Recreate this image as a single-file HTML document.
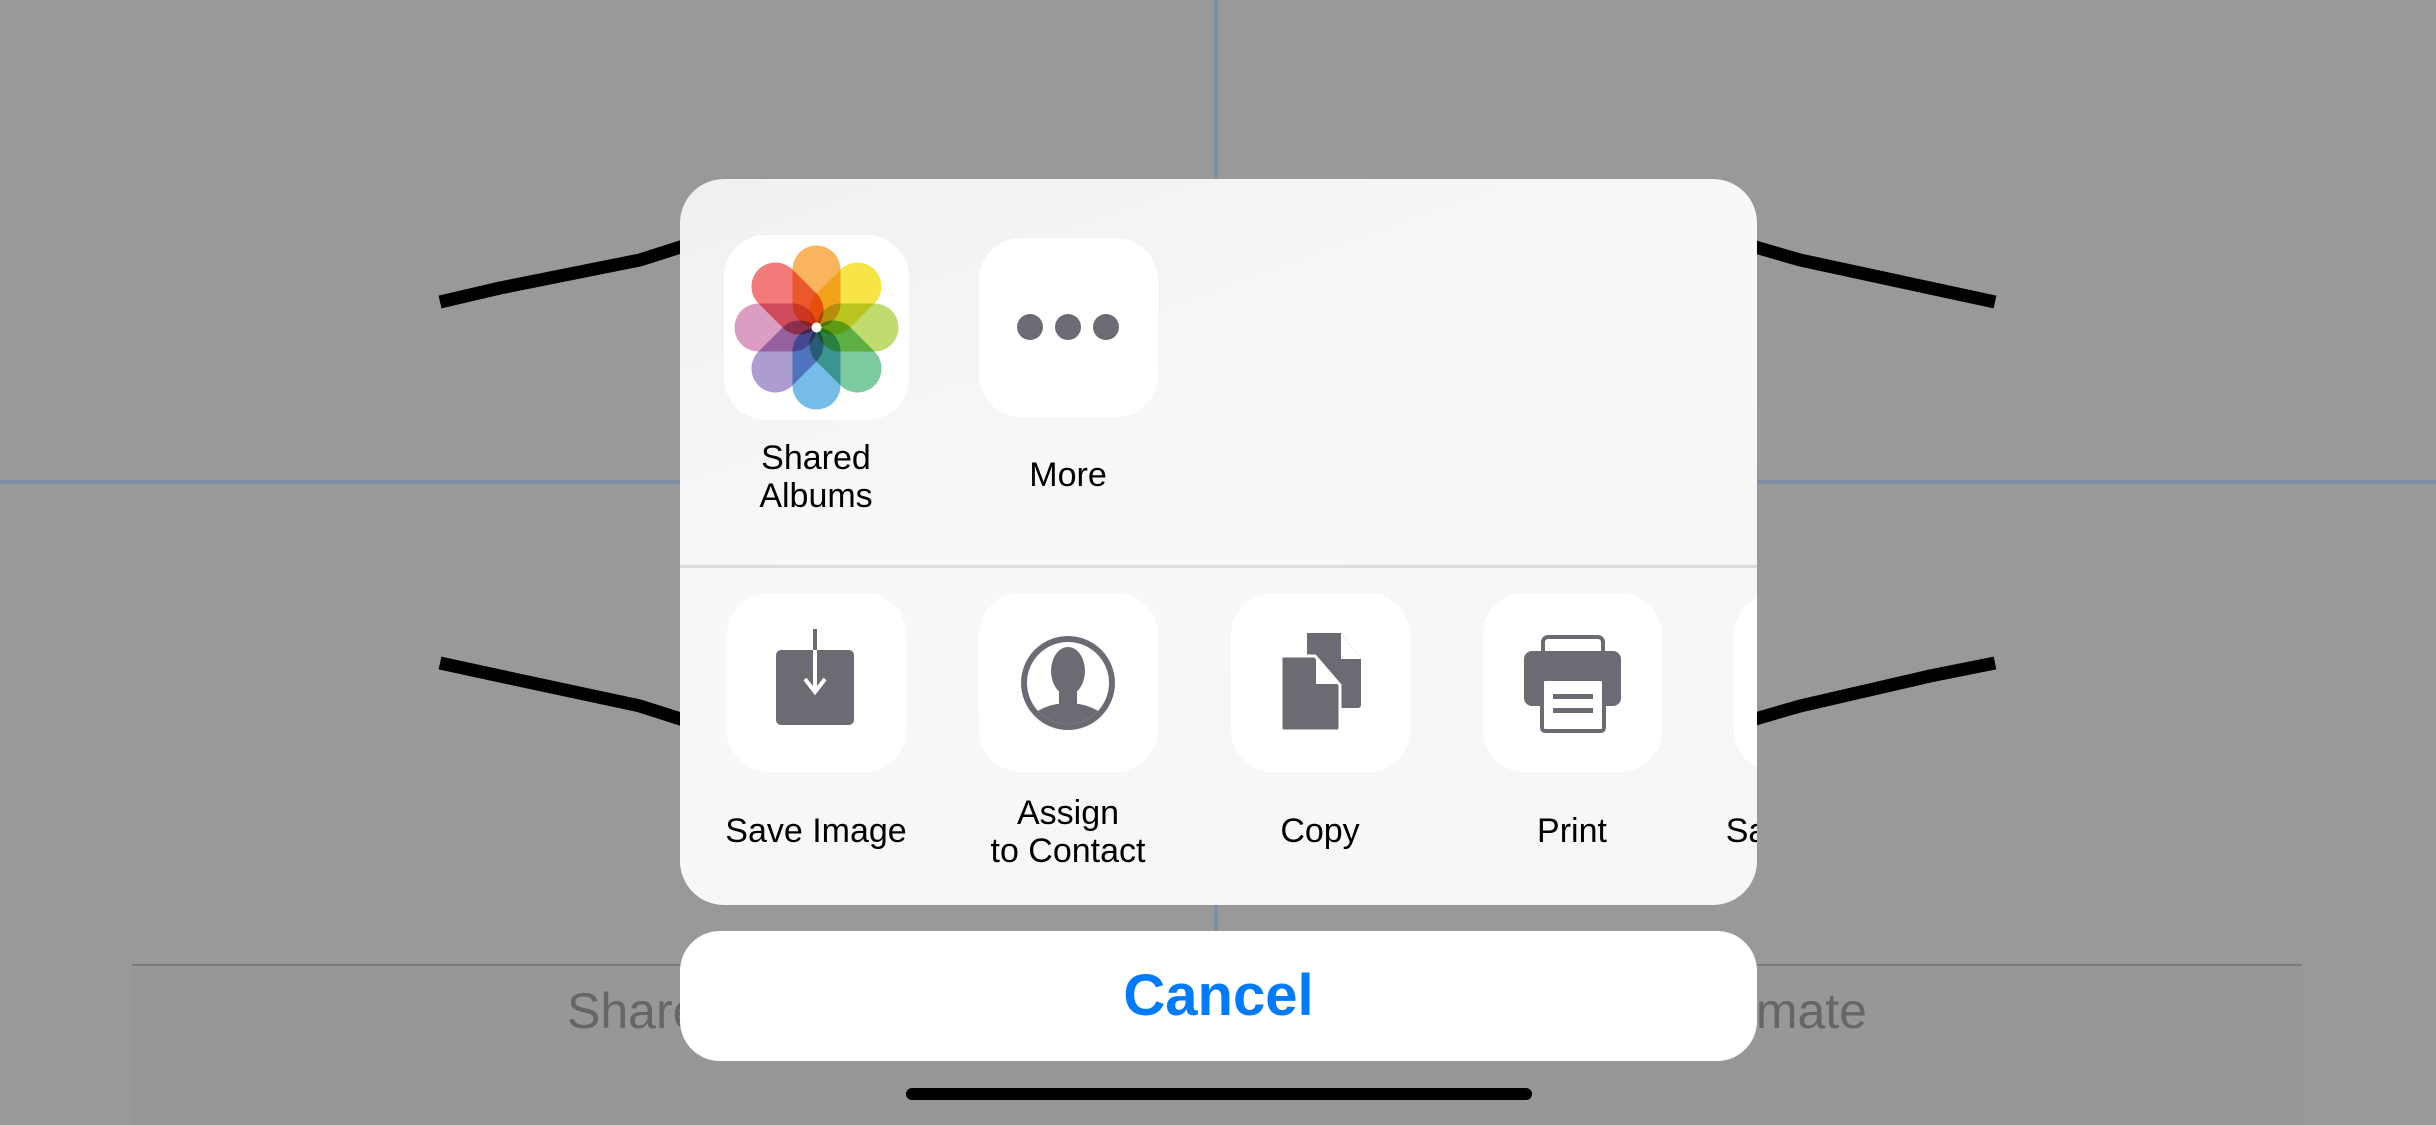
<!DOCTYPE html>
<html><head><meta charset="utf-8"><style>
html,body{margin:0;padding:0}
body{width:2436px;height:1125px;background:#999;position:relative;overflow:hidden;font-family:"Liberation Sans",sans-serif}
.abs{position:absolute}
.sheet{left:680px;top:179px;width:1077px;height:726px;background:linear-gradient(160deg,#f0f0f0,#f8f8f8 40%,#f6f6f6);border-radius:44px;overflow:hidden}
.box{position:absolute;background:#fff;border-radius:42px;width:179px;height:179px}
.lbl{position:absolute;width:260px;text-align:center;font-size:34px;line-height:38px;color:#000}
.cancel{left:680px;top:931px;width:1077px;height:130px;background:#fff;border-radius:40px;color:#007aff;font-weight:bold;font-size:58px;text-align:center;line-height:130px}
.p{mix-blend-mode:multiply;opacity:.82}
</style></head><body>
<svg class="abs" style="left:0;top:0" width="2436" height="1125">
<line x1="1216" y1="0" x2="1216" y2="930" stroke="#7d8ea6" stroke-width="4"/>
<line x1="0" y1="482" x2="2436" y2="482" stroke="#7d8ea6" stroke-width="4"/>
<polyline points="440,302 500,288 640,260 690,244" fill="none" stroke="#000" stroke-width="13"/>
<polyline points="1745,244 1800,260 1930,288 1995,302" fill="none" stroke="#000" stroke-width="13"/>
<polyline points="440,663 500,676 640,706 690,722" fill="none" stroke="#000" stroke-width="13"/>
<polyline points="1745,722 1800,706 1930,676 1995,663" fill="none" stroke="#000" stroke-width="13"/>
<line x1="132" y1="965" x2="2302" y2="965" stroke="#7a7a7a" stroke-width="2"/>
<rect x="132" y="966" width="2170" height="159" fill="#979797"/>
<text x="567" y="1028" font-family="Liberation Sans" font-size="50" fill="#666">Share</text>
<text x="1867" y="1028" font-family="Liberation Sans" font-size="50" fill="#666" text-anchor="end">Animate</text>
<rect x="906" y="1088" width="626" height="12" rx="6" fill="#000"/>
</svg>
<div class="abs sheet">
  <div class="box" style="left:44px;top:56px;width:185px;height:185px">
    <svg width="185" height="185" viewBox="-92.5 -92.5 185 185" style="position:absolute;left:0;top:0">
        <rect class="p" x="-24" y="-82" width="48" height="82" rx="24" fill="#f9a43a" transform="rotate(0)"/>
        <rect class="p" x="-24" y="-82" width="48" height="82" rx="24" fill="#f5df1e" transform="rotate(45)"/>
        <rect class="p" x="-24" y="-82" width="48" height="82" rx="24" fill="#b2d44f" transform="rotate(90)"/>
        <rect class="p" x="-24" y="-82" width="48" height="82" rx="24" fill="#5fbf8a" transform="rotate(135)"/>
        <rect class="p" x="-24" y="-82" width="48" height="82" rx="24" fill="#58ade3" transform="rotate(180)"/>
        <rect class="p" x="-24" y="-82" width="48" height="82" rx="24" fill="#9a86c6" transform="rotate(225)"/>
        <rect class="p" x="-24" y="-82" width="48" height="82" rx="24" fill="#d487b6" transform="rotate(270)"/>
        <rect class="p" x="-24" y="-82" width="48" height="82" rx="24" fill="#ef5e5c" transform="rotate(315)"/>
      <circle r="5" fill="#fff"/>
    </svg>
  </div>
  <div class="lbl" style="left:6px;top:260px">Shared<br>Albums</div>
  <div class="box" style="left:299px;top:59px">
    <svg width="179" height="179" style="position:absolute;left:0;top:0"><g fill="#6b6b73"><circle cx="51" cy="89" r="13"/><circle cx="89" cy="89" r="13"/><circle cx="127" cy="89" r="13"/></g></svg>
  </div>
  <div class="lbl" style="left:258px;top:277px">More</div>
  <div class="abs" style="left:0;top:386px;width:1077px;height:3px;background:#dcdcdc"></div>

  <div class="box" style="left:47px;top:414px">
    <svg width="179" height="179" style="position:absolute;left:0;top:0"><rect x="49" y="57" width="78" height="75" rx="5" fill="#6b6b73"/><line x1="88" y1="36" x2="88" y2="98" stroke="#6b6b73" stroke-width="4"/><line x1="88" y1="57" x2="88" y2="98" stroke="#fff" stroke-width="4"/><polyline points="78,86 88,99 98,86" fill="none" stroke="#fff" stroke-width="4"/></svg>
  </div>
  <div class="lbl" style="left:6px;top:633px">Save Image</div>

  <div class="box" style="left:299px;top:414px">
    <svg width="179" height="179" style="position:absolute;left:0;top:0"><defs><clipPath id="c"><circle cx="89" cy="90" r="41"/></clipPath></defs><circle cx="89" cy="90" r="44" fill="none" stroke="#6b6b73" stroke-width="6"/><g clip-path="url(#c)" fill="#6b6b73"><ellipse cx="89" cy="78" rx="17" ry="24"/><rect x="80" y="92" width="18" height="20"/><ellipse cx="89" cy="140" rx="44" ry="30"/></g></svg>
  </div>
  <div class="lbl" style="left:258px;top:615px">Assign<br>to Contact</div>

  <div class="box" style="left:551px;top:414px">
    <svg width="179" height="179" style="position:absolute;left:0;top:0"><path d="M76 40 H110 L130 66 V112 A3 3 0 0 1 127 115 H76 Z" fill="#6b6b73"/><path d="M110 40 L130 66 H110 Z" fill="#fff"/><path d="M50 63 H84 L109 92 V135 A3 3 0 0 1 106 138 H53 A3 3 0 0 1 50 135 Z" fill="#6b6b73" stroke="#fff" stroke-width="3"/><path d="M85 64 L108 91 H85 Z" fill="#fff"/></svg>
  </div>
  <div class="lbl" style="left:510px;top:633px">Copy</div>

  <div class="box" style="left:803px;top:414px">
    <svg width="179" height="179" style="position:absolute;left:0;top:0"><rect x="60" y="44" width="60" height="30" rx="5" fill="none" stroke="#6b6b73" stroke-width="4"/><rect x="41" y="58" width="97" height="55" rx="8" fill="#6b6b73"/><rect x="59" y="86" width="62" height="52" rx="3" fill="#fff" stroke="#6b6b73" stroke-width="4"/><rect x="70" y="101" width="40" height="5" fill="#6b6b73"/><rect x="70" y="115" width="40" height="5" fill="#6b6b73"/></svg>
  </div>
  <div class="lbl" style="left:762px;top:633px">Print</div>

  <div class="box" style="left:1054px;top:414px"></div>
  <div class="lbl" style="left:1014px;top:633px">Save to Files</div>
</div>
<div class="abs cancel">Cancel</div>
</body></html>
